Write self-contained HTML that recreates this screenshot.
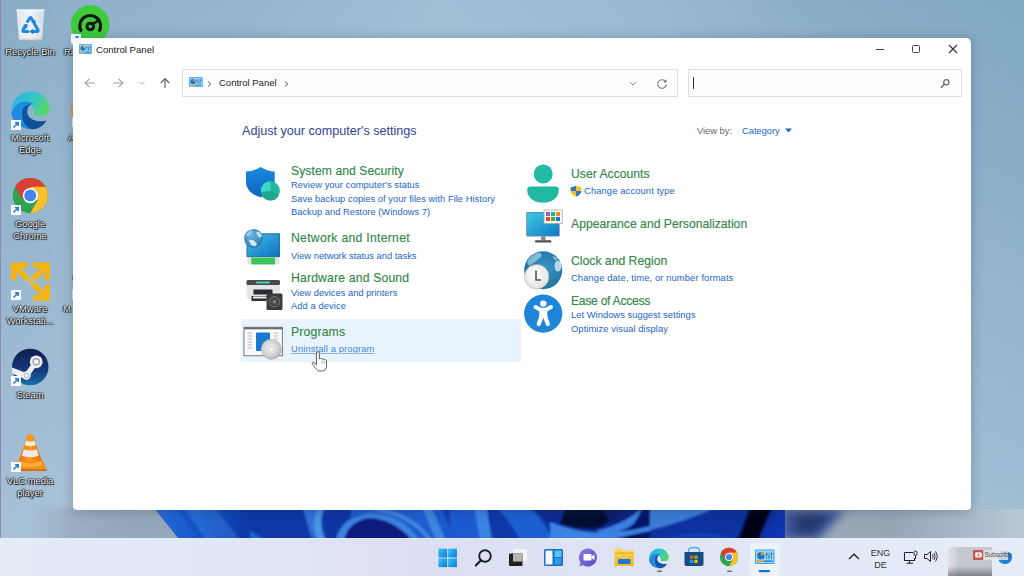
<!DOCTYPE html>
<html><head><meta charset="utf-8">
<style>
*{margin:0;padding:0;box-sizing:border-box}
html,body{width:1024px;height:576px;overflow:hidden}
body{position:relative;font-family:"Liberation Sans",sans-serif;background:#8fb0c9}
.abs{position:absolute}
#desk{left:0;top:0;width:1024px;height:576px;background:linear-gradient(180deg,rgba(200,216,230,0) 0,rgba(200,216,230,.5) 576px),linear-gradient(90deg,#88acc8 0,#8eb0ca 60px,#94b4cc 220px,#a0c0d6 440px,#9abad2 640px,#8aaec8 820px,#80a8c4 1024px)}
#leftline{left:0;top:0;width:1px;height:576px;background:#9088b4}
#bloom{left:150px;top:505px;width:640px;height:35px;background:linear-gradient(90deg,#1740a8 0%,#0f3fb8 30%,#0a2fa0 55%,#1e5fd6 75%,#0a2890 100%)}
#win{left:73px;top:38px;width:898px;height:472px;background:#fff;border-radius:5px 5px 4px 4px;box-shadow:0 1px 12px rgba(30,45,70,.3)}
#taskbar{left:0;top:538px;width:1024px;height:38px;background:linear-gradient(90deg,#e3ebf7 0,#e0e7f6 250px,#dcdff3 420px,#dde2f4 600px,#e2e9f7 800px,#e6edf8 1024px);border-top:1px solid #e8eef8}
.t{position:absolute;white-space:nowrap;line-height:1}
.h{color:#338848;font-size:12.2px;-webkit-text-stroke:.15px #338848}
.l{color:#2366c9;font-size:9.35px}
.sc{position:absolute;width:10px;height:10px;background:#fff}.sc:after{content:"";position:absolute;left:2px;top:2px;width:6px;height:6px;background:linear-gradient(135deg,transparent 40%,#1e7fd8 40%,#1e7fd8 60%,transparent 60%)}
.dl{position:absolute;color:#f4f4f4;font-size:9.4px;text-align:center;text-shadow:0 0 1px #000,1px 1px 1px #000,-1px 0 1px rgba(0,0,0,.7),0 -1px 1px rgba(0,0,0,.5);width:60px;line-height:12px}
</style></head><body>
<div id="desk" class="abs"></div>
<div class="abs" style="left:30px;top:503px;width:152px;height:35px;-webkit-mask-image:linear-gradient(180deg,transparent 0,#000 9px);background:linear-gradient(90deg,rgba(140,156,176,0) 0,rgba(140,156,176,.5) 43px,rgba(140,156,176,.72) 100px,rgba(140,156,176,.72) 152px)"></div>
<svg id="bloomsvg" class="abs" style="left:73px;top:505px" width="951" height="34" viewBox="73 505 951 34">
 <defs>
  <filter id="bl1" x="-10%" y="-50%" width="120%" height="200%"><feGaussianBlur stdDeviation="1"/></filter>
  <filter id="bl4" x="-50%" y="-50%" width="200%" height="200%"><feGaussianBlur stdDeviation="5"/></filter>
  <linearGradient id="bg1" x1="0" y1="0" x2="1" y2="0"><stop offset="0" stop-color="#2a6edc"/><stop offset=".35" stop-color="#1a5ed0"/><stop offset="1" stop-color="#0a38a6"/></linearGradient>
  <linearGradient id="grayr" x1="0" y1="0" x2="1" y2="0"><stop offset="0" stop-color="#9aa8b8"/><stop offset=".45" stop-color="#97a5b5"/><stop offset=".8" stop-color="#acbccc"/><stop offset="1" stop-color="#b8c8d6"/></linearGradient><linearGradient id="graybl" x1="0" y1="0" x2="1" y2="0"><stop offset="0" stop-color="#9aaabb"/><stop offset="1" stop-color="#aab6c2"/></linearGradient>
  <clipPath id="bclip"><path d="M155.9 510H785V538H178.3Z"/></clipPath>
 </defs>
 <!-- gray under-window band -->
 <!-- blurred right part -->
 <rect x="785" y="509" width="239" height="30" fill="url(#grayr)"/>
 <g filter="url(#bl4)">
  <path d="M782 509H846L818 540H782Z" fill="#3a5294"/>
  <path d="M796 514H832L814 534H796Z" fill="#26386e"/>
 </g>
 <g clip-path="url(#bclip)">
  <rect x="150" y="510" width="640" height="28" fill="#0c3aa8"/>
  <g filter="url(#bl1)">
   <!-- 150-250 -->
   <path d="M150 508H250V540H150Z" fill="url(#bg1)"/>
   <path d="M176 508L200 540H206L184 508Z" fill="#1450c0" opacity=".8"/>
   <path d="M184 508H215L240 540H206Z" fill="#3c84e4" opacity=".4"/>
   <!-- 250-350 -->
   <path d="M250 508H305L312 540H250Z" fill="#0a38a6"/>
   <path d="M250 530Q262 540 270 540H250Z" fill="#1e62d4"/>
   <path d="M303 508H318Q312 522 314 540H312Z" fill="#3070d8"/>
   <path d="M318 508Q310 524 316 540H326Q318 524 324 508Z" fill="#4a92e4"/>
   <path d="M324 508H352V540H330Q322 524 324 508Z" fill="#0a36a4"/>
   <path d="M337 540Q340 524 354 518L360 520Q346 528 344 540Z" fill="#3e86e2"/>
   <!-- 350-450 -->
   <path d="M344 540Q348 520 368 517Q392 516 412 540Z" fill="#0a1c7c"/>
   <path d="M336 540Q340 518 368 513Q400 512 420 540H412Q392 518 368 518Q348 522 344 540Z" fill="#3a82e0"/>
   <path d="M352 508H420Q440 520 436 540H420Q400 512 368 513Q356 514 350 518Z" fill="#1c5ed0"/>
   <path d="M378 508Q415 514 432 540H428Q410 516 372 510Z" fill="#5a9ae8" opacity=".7"/>
   <path d="M422 508H432L446 540H436Z" fill="#3c84e0"/>
   <path d="M432 508H442L455 540H446Z" fill="#1a58cc"/>
   <path d="M442 508H478L482 540H455Z" fill="#0e3eb0"/>
   <!-- 450-550 -->
   <path d="M450 508H476L480 540H450Z" fill="#1a5ad2"/>
   <path d="M474 508H487L492 540H480Z" fill="#3a82e2"/>
   <path d="M487 508H498Q512 525 520 540H492Z" fill="#0c38a8"/>
   <path d="M498 508H530Q545 520 552 540H520Q512 525 498 508Z" fill="#1e5ed0"/>
   <path d="M530 508H555V530Q545 518 530 508Z" fill="#0a2a92"/>
   <!-- 550-650 -->
   <path d="M550 508H650V540H550Z" fill="#0a2a92"/>
   <path d="M566 508H625Q615 520 598 528Q580 530 560 524Z" fill="#020a30"/>
   <path d="M600 508H640Q628 522 600 530Q615 520 600 508Z" fill="#0a2278" opacity=".8"/>
   <path d="M596 531Q625 524 642 508H650Q636 528 606 536Z" fill="#3a7ee0"/>
   <path d="M642 508H650V528Q640 532 620 536Q636 526 642 508Z" fill="#06146a"/>
   <path d="M550 522Q575 532 600 533Q625 533 650 526V532Q625 540 600 540H550Z" fill="#3a82e4"/>
   <path d="M612 540Q632 534 650 531V540Z" fill="#061468"/>
   <!-- 650-785 -->
   <path d="M650 508H790V540H650Z" fill="#0a32a0"/>
   <path d="M650 508H714Q690 520 650 530Z" fill="#3a7cd8"/>
   <path d="M660 540Q700 526 740 540Z" fill="#0e48c8" opacity=".6"/>
   <path d="M750 508H780L762 540H738Z" fill="#020618" filter="url(#bl1)"/>
   <path d="M772 508H790V540H758Z" fill="#0a36b0" opacity=".85"/>
  </g>
 </g>
</svg>

<!-- desktop icons -->
<svg class="abs" style="left:0;top:0" width="73" height="510" viewBox="0 0 73 510">
 <defs>
  <linearGradient id="rb" x1="0" y1="0" x2="1" y2="0"><stop offset="0" stop-color="#e6edf3"/><stop offset=".5" stop-color="#f6f9fb"/><stop offset="1" stop-color="#d6e0e8"/></linearGradient>
  <linearGradient id="edg1" x1="0" y1=".2" x2="1" y2=".7"><stop offset="0" stop-color="#2ab2ee"/><stop offset=".55" stop-color="#36c9c0"/><stop offset="1" stop-color="#5ad85a"/></linearGradient>
  <linearGradient id="edg2" x1="0" y1="0" x2="1" y2="1"><stop offset="0" stop-color="#0c59a4"/><stop offset="1" stop-color="#114a8b"/></linearGradient>
  <linearGradient id="stm" x1="0" y1="0" x2="0" y2="1"><stop offset="0" stop-color="#111d4e"/><stop offset=".6" stop-color="#17397a"/><stop offset="1" stop-color="#1670b0"/></linearGradient>
  <linearGradient id="vlc" x1="0" y1="0" x2="1" y2="0"><stop offset="0" stop-color="#e8700a"/><stop offset=".5" stop-color="#ff9a20"/><stop offset="1" stop-color="#e06a00"/></linearGradient>
 </defs>
 <!-- recycle bin -->
 <path d="M16.5 9.5H44.5L42 40H19Z" fill="url(#rb)" opacity=".92"/><path d="M16.5 9.5H44.5V11H16.5Z" fill="#fff" opacity=".7"/>
 <path d="M19 38.5H42L41.8 40.5H19.2Z" fill="#d8b8a0" opacity=".6"/>
 <g fill="none" stroke="#1e86de" stroke-width="3" stroke-linecap="round" stroke-linejoin="round">
  <path d="M27.5 21.5L29.8 18Q30.5 17 31.2 18L33 21"/>
  <path d="M34.5 24L38 30Q38.5 31.5 37 31.5H33"/>
  <path d="M28 31.5H24Q22.5 31.5 23 30L25.5 25.5"/>
 </g>
 <g fill="#1e86de"><path d="M31 22.5L35.5 20L35.8 24.8Z"/><path d="M33 28.5V34.5L29.5 31.5Z"/><path d="M23 25L27.8 24.2L27 28.8Z"/></g>
 <!-- edge -->
 <path d="M11.5 111C11.5 100 20 91.4 31 91.4C42 91.4 49.6 100 49.6 108.5C49.6 113 46.5 115.5 42 115.5H34C35.5 111.5 34 107 30 105.3C24 103 16 105 11.8 112Z" fill="url(#edg1)"/>
 <path d="M11.8 112C14.5 105 20 101.5 26 101.5C29.5 101.5 32 102.5 33.5 104C28 103.5 23 107 22 112.5C21 120 26 127 33 129.3C21 129.5 11.5 122 11.5 112Z" fill="#1d8ce0"/>
 <path d="M22 112.5C22.5 107 26.5 104 31 104.3C27.5 107 26.5 111 27.8 114.5C29.5 119 35 121.5 41 121.3C43.5 121.2 45.5 120.8 46.4 120.5C44 125.5 38 129.3 32.5 129.3C26 128.5 21.5 121 22 112.5Z" fill="url(#edg2)"/>
 <!-- chrome -->
 <circle cx="30.3" cy="195.6" r="17.6" fill="#2ea44f"/>
 <path d="M30.3 195.6L15 186.8A17.6 17.6 0 0 1 45.5 186.8Z" fill="#dc3e33"/>
 <path d="M30.3 195.6L45.5 186.8A17.6 17.6 0 0 1 30.3 213.2Z" fill="#f8c12c"/>
 <path d="M15 186.8L22.6 200L30.3 195.6Z" fill="#dc3e33"/>
 <path d="M30.3 213.2L37.9 200L45.5 186.8 30.3 186.8Z" fill="#f8c12c"/>
 <path d="M22.6 200L30.3 213.2L37.9 200Z" fill="#2ea44f"/>
 <circle cx="30.3" cy="195.6" r="7.6" fill="#fff"/>
 <circle cx="30.3" cy="195.6" r="6" fill="#4285f0"/>
 <!-- vmware -->
 <g fill="none" stroke="#f2b416" stroke-width="5.6" stroke-linejoin="miter">
  <path d="M13.8 280V265.3H27.5"/>
  <path d="M33 265.3H47.2V280"/>
  <path d="M47.2 284.5V298H33"/>
  <path d="M15 266.5L30.5 281.5L46 266.5M30.5 281.5L46 297"/>
 </g>
 <rect x="27" y="278" width="7" height="7" fill="#a8bfd3" transform="rotate(45 30.5 281.5)"/>
 <rect x="28.5" y="279.5" width="4" height="4" fill="#f2b416" transform="rotate(45 30.5 281.5)"/>
 <!-- steam -->
 <circle cx="30.2" cy="367" r="18.3" fill="url(#stm)"/>
 <path d="M11.9 367.5L25 372.5L27 380L12.5 373.5Z" fill="#eef0f4"/>
 <path d="M26.5 375.5L36.2 361.8" stroke="#eef0f4" stroke-width="5"/>
 <circle cx="36.2" cy="361.8" r="6.4" fill="#eef0f4"/>
 <circle cx="36.2" cy="361.8" r="3.7" fill="#8c8eb0"/>
 <circle cx="36.2" cy="361.8" r="2.6" fill="#f4f4f8"/>
 <circle cx="26.5" cy="375.5" r="4.2" fill="#eef0f4"/>
 <circle cx="26.5" cy="375.5" r="2.4" fill="none" stroke="#9a9cb8" stroke-width=".7"/>
 <!-- vlc -->
 <path d="M27.3 435.5C28 433.8 32.5 433.8 33.2 435.5L42.5 463H18Z" fill="url(#vlc)"/>
 <path d="M26 440.5C28 441.8 32.5 441.8 34.5 440.5L35.8 445C33 446.5 27.5 446.5 24.7 445Z" fill="#ececec"/>
 <path d="M23.8 449C27 451 33.5 451 36.7 449L38.6 455.5C34.5 457.8 26 457.8 21.9 455.5Z" fill="#ececec"/>
 <path d="M17 461L43.5 461L46.5 470.5H16.5Z" fill="#f39018"/>
 <path d="M19.5 460.5C24 464.5 36.5 464.5 41 460.5L42 465C36 468 24 468 18.5 465Z" fill="#ffad40"/>
 <path d="M16.5 469H46.5V471H16.5Z" fill="#d87000"/>
 <!-- green app (partially) -->
 <circle cx="90" cy="24" r="19" fill="#3ec83e"/>
</svg>
<!-- green app icon -->
<svg class="abs" style="left:70px;top:4px" width="40" height="34" viewBox="70 4 40 34">
 <circle cx="90.3" cy="24.5" r="19.2" fill="#3ecb3a"/>
 <path d="M81.5 31.6A10.4 10.4 0 1 1 98.9 31.6" fill="none" stroke="#161616" stroke-width="3.2"/>
 <circle cx="90.3" cy="26.5" r="4.8" fill="#161616"/>
 <circle cx="90.3" cy="26.5" r="1.8" fill="#3ecb3a"/>
 <path d="M92.5 24.2L97.8 21" stroke="#161616" stroke-width="2.6" stroke-linecap="round"/>
</svg>
<!-- shortcut arrows -->
<svg class="abs" style="left:11px;top:120px" width="10" height="10" viewBox="0 0 10 10"><rect width="10" height="10" fill="#fafafa"/><path d="M2.5 7.5L7 3M4 2.8H7.2V6" fill="none" stroke="#1e80d8" stroke-width="1.5"/></svg>
<svg class="abs" style="left:11px;top:205px" width="10" height="10" viewBox="0 0 10 10"><rect width="10" height="10" fill="#fafafa"/><path d="M2.5 7.5L7 3M4 2.8H7.2V6" fill="none" stroke="#1e80d8" stroke-width="1.5"/></svg>
<svg class="abs" style="left:11px;top:290px" width="10" height="10" viewBox="0 0 10 10"><rect width="10" height="10" fill="#fafafa"/><path d="M2.5 7.5L7 3M4 2.8H7.2V6" fill="none" stroke="#1e80d8" stroke-width="1.5"/></svg>
<svg class="abs" style="left:11px;top:376px" width="10" height="10" viewBox="0 0 10 10"><rect width="10" height="10" fill="#fafafa"/><path d="M2.5 7.5L7 3M4 2.8H7.2V6" fill="none" stroke="#1e80d8" stroke-width="1.5"/></svg>
<svg class="abs" style="left:11px;top:462px" width="10" height="10" viewBox="0 0 10 10"><rect width="10" height="10" fill="#fafafa"/><path d="M2.5 7.5L7 3M4 2.8H7.2V6" fill="none" stroke="#1e80d8" stroke-width="1.5"/></svg>
<!-- labels -->
<div class="dl" style="left:0px;top:46px">Recycle Bin</div>
<div class="dl" style="left:64px;top:46px;text-align:left;width:20px">Ra</div>
<div class="dl" style="left:0px;top:132px">Microsoft<br>Edge</div>
<div class="dl" style="left:0px;top:218px">Google<br>Chrome</div>
<div class="dl" style="left:0px;top:303px">VMware<br>Workstati...</div>
<div class="dl" style="left:63px;top:303px;text-align:left;width:20px">M</div>
<div class="dl" style="left:0px;top:389px">Steam</div>
<div class="dl" style="left:0px;top:475px">VLC media<br>player</div>

<!-- partial icons under window -->
<div class="abs" style="left:71px;top:104px;width:2px;height:12px;background:#e8944a;border-radius:1px 0 0 1px"></div>
<div class="abs" style="left:71.5px;top:118px;width:1.5px;height:9px;background:#e6ecf2"></div>
<div class="dl" style="left:68px;top:132px;text-align:left;width:10px">A</div>
<div class="abs" style="left:71.5px;top:275px;width:1.5px;height:5px;background:#7a6ad0"></div>
<div class="abs" style="left:71.5px;top:290px;width:1.5px;height:9px;background:#e6ecf2"></div>

<div id="leftline" class="abs"></div>

<!-- window -->
<div id="win" class="abs"></div>
<div class="abs" style="left:71px;top:34px;width:10px;height:10px;background:#f2f4f8;border-radius:0 0 0 2px"></div>
<div class="abs" style="left:75px;top:36px;width:4px;height:2px;background:#3a8ed0;border-radius:1px"></div>


<!-- title icon -->
<svg class="abs" style="left:79px;top:43.7px" width="13.2" height="10" viewBox="0 0 20 15" preserveAspectRatio="none">
   <rect x="0" y="0" width="20" height="15" rx="1" fill="#3aa4e4"/>
   <rect x="1" y="1" width="18" height="13" fill="#9ad6f4"/>
   <circle cx="6" cy="6.5" r="3.8" fill="#1a74cc"/>
   <path d="M6 6.5V2.7A3.8 3.8 0 0 1 9.6 5.5Z" fill="#f39a1a"/>
   <path d="M12 3v7M14.5 3v7M17 3v7" stroke="#2a78c0" stroke-width=".8"/>
   <path d="M11.2 5h1.6M13.7 7.5h1.6M16.2 4.5h1.6" stroke="#1a5aa0" stroke-width="1.2"/>
   <rect x="2" y="11.3" width="7" height="1.6" fill="#f39a1a"/>
   <rect x="9" y="11.3" width="9" height="1.6" fill="#2a86d6"/>
  </svg>
<div class="t" style="left:96px;top:45px;font-size:9.6px;color:#1a1a1a">Control Panel</div>
<!-- window controls -->
<div class="abs" style="left:876px;top:49px;width:8px;height:1px;background:#444"></div>
<div class="abs" style="left:912px;top:45px;width:8px;height:8px;border:1.2px solid #444;border-radius:1.5px"></div>
<svg class="abs" style="left:948px;top:44px" width="10" height="10" viewBox="0 0 10 10"><path d="M1 1L9 9M9 1L1 9" stroke="#333" stroke-width="1.1"/></svg>
<!-- nav arrows -->
<svg class="abs" style="left:83px;top:77px" width="14" height="12" viewBox="0 0 14 12"><path d="M12 6H2.5M6.5 1.8L2 6l4.5 4.2" fill="none" stroke="#a0a0a0" stroke-width="1.1"/></svg>
<svg class="abs" style="left:111px;top:77px" width="14" height="12" viewBox="0 0 14 12"><path d="M2 6h9.5M7.5 1.8L12 6l-4.5 4.2" fill="none" stroke="#a0a0a0" stroke-width="1.1"/></svg>
<svg class="abs" style="left:139px;top:81px" width="6" height="4" viewBox="0 0 6 4"><path d="M.5 .8L3 3.2 5.5 .8" fill="none" stroke="#a8a8a8" stroke-width=".9"/></svg>
<svg class="abs" style="left:159px;top:77px" width="12" height="12" viewBox="0 0 12 12"><path d="M6 11V2M1.8 6L6 1.6 10.2 6" fill="none" stroke="#5c5c5c" stroke-width="1.1"/></svg>
<!-- address bar -->
<div class="abs" style="left:182px;top:69px;width:496px;height:28px;border:1px solid #dedede;background:#fdfdfd"></div>
<svg class="abs" style="left:189.3px;top:77px" width="13.7" height="10.3" viewBox="0 0 20 15" preserveAspectRatio="none">
   <rect x="0" y="0" width="20" height="15" rx="1" fill="#3aa4e4"/>
   <rect x="1" y="1" width="18" height="13" fill="#9ad6f4"/>
   <circle cx="6" cy="6.5" r="3.8" fill="#1a74cc"/>
   <path d="M6 6.5V2.7A3.8 3.8 0 0 1 9.6 5.5Z" fill="#f39a1a"/>
   <path d="M12 3v7M14.5 3v7M17 3v7" stroke="#2a78c0" stroke-width=".8"/>
   <path d="M11.2 5h1.6M13.7 7.5h1.6M16.2 4.5h1.6" stroke="#1a5aa0" stroke-width="1.2"/>
   <rect x="2" y="11.3" width="7" height="1.6" fill="#f39a1a"/>
   <rect x="9" y="11.3" width="9" height="1.6" fill="#2a86d6"/>
  </svg>
<svg class="abs" style="left:207px;top:81px" width="5" height="6" viewBox="0 0 5 6"><path d="M1 .6L3.8 3 1 5.4" fill="none" stroke="#555" stroke-width="1"/></svg>
<div class="t" style="left:219px;top:78px;font-size:9.5px;color:#222">Control Panel</div>
<svg class="abs" style="left:284px;top:81px" width="5" height="6" viewBox="0 0 5 6"><path d="M1 .6L3.8 3 1 5.4" fill="none" stroke="#555" stroke-width="1"/></svg>
<svg class="abs" style="left:629px;top:81px" width="8" height="5" viewBox="0 0 8 5"><path d="M.8 1L4 4 7.2 1" fill="none" stroke="#8a8a8a" stroke-width="1"/></svg>
<svg class="abs" style="left:656px;top:78px" width="12" height="12" viewBox="0 0 12 12"><path d="M9.6 3.6A4.3 4.3 0 1 0 10.3 6.4" fill="none" stroke="#777" stroke-width="1.1"/><path d="M10.6 1.2v3.2H7.4z" fill="#777"/></svg>
<!-- search -->
<div class="abs" style="left:688px;top:69px;width:274px;height:28px;border:1px solid #dedede;background:#fdfdfd"></div>
<div class="abs" style="left:693px;top:77px;width:1px;height:12px;background:#333"></div>
<svg class="abs" style="left:939px;top:77px" width="11" height="12" viewBox="0 0 11 12"><circle cx="7.3" cy="5.3" r="2.6" fill="none" stroke="#666" stroke-width="1.2"/><path d="M5.4 7.2L1.8 10.8" stroke="#666" stroke-width="1.3"/></svg>
<!-- view by triangle -->
<svg class="abs" style="left:785px;top:128px" width="7" height="5" viewBox="0 0 7 5"><path d="M0 .5h7L3.5 4.5z" fill="#2366c9"/></svg>
<!-- programs highlight -->
<div class="abs" style="left:241px;top:319px;width:280px;height:43px;background:#e9f3fb"></div>


<!-- content headings -->
<div class="t" style="left:242px;top:125px;font-size:12.6px;color:#2f4496">Adjust your computer's settings</div>
<div class="t" style="left:697px;top:127px;font-size:9.3px;color:#666">View by:</div>
<div class="t" style="left:742px;top:127px;font-size:9.3px;color:#2366c9">Category</div>

<div class="t h" style="left:291px;top:165px;letter-spacing:0.056px">System and Security</div>
<div class="t l" style="left:291px;top:181px;letter-spacing:0.057px">Review your computer's status</div>
<div class="t l" style="left:291px;top:195px;letter-spacing:0.029px">Save backup copies of your files with File History</div>
<div class="t l" style="left:291px;top:208px">Backup and Restore (Windows 7)</div>

<div class="t h" style="left:291px;top:232px;letter-spacing:0.289px">Network and Internet</div>
<div class="t l" style="left:291px;top:252px">View network status and tasks</div>

<div class="t h" style="left:291px;top:272px;letter-spacing:0.171px">Hardware and Sound</div>
<div class="t l" style="left:291px;top:289px">View devices and printers</div>
<div class="t l" style="left:291px;top:302px;letter-spacing:0.073px">Add a device</div>

<div class="t h" style="left:291px;top:326px;letter-spacing:0.171px">Programs</div>
<div class="t l" style="left:291px;top:345px;text-decoration:underline;text-decoration-color:#7ab2ea;color:#3a88e0;letter-spacing:0.128px">Uninstall a program</div>

<div class="t h" style="left:571px;top:168px">User Accounts</div>
<div class="t l" style="left:584px;top:187px;letter-spacing:0.133px">Change account type</div>
<div class="t h" style="left:571px;top:218px">Appearance and Personalization</div>
<div class="t h" style="left:571px;top:255px">Clock and Region</div>
<div class="t l" style="left:571px;top:274px;letter-spacing:0.126px">Change date, time, or number formats</div>
<div class="t h" style="left:571px;top:295px;letter-spacing:-0.308px">Ease of Access</div>
<div class="t l" style="left:571px;top:311px;letter-spacing:0.033px">Let Windows suggest settings</div>
<div class="t l" style="left:571px;top:325px;letter-spacing:0.086px">Optimize visual display</div>


<!-- CP icons -->
<svg class="abs" style="left:240px;top:160px" width="50" height="210" viewBox="240 160 50 210">
 <defs>
  <linearGradient id="shg" x1="0" y1="0" x2="0" y2="1"><stop offset="0" stop-color="#1c8ae0"/><stop offset="1" stop-color="#0c64c0"/></linearGradient>
  <linearGradient id="mong" x1="0" y1="0" x2="1" y2="1"><stop offset="0" stop-color="#3cc0e8"/><stop offset="1" stop-color="#1270c0"/></linearGradient>
  <radialGradient id="glob" cx=".4" cy=".35" r=".7"><stop offset="0" stop-color="#6ab4e0"/><stop offset="1" stop-color="#2a78aa"/></radialGradient>
  <radialGradient id="disc" cx=".45" cy=".45" r=".6"><stop offset="0" stop-color="#f4f4f4"/><stop offset=".6" stop-color="#d2d2d2"/><stop offset="1" stop-color="#b0b0b0"/></radialGradient>
 </defs>
 <!-- shield -->
 <path d="M246 171.5C251 171.5 256 169.5 260.5 167C265 169.5 270 171.5 274.7 171.5V182C274.7 190 268 195 260.5 197.3C253 195 246 190 246 182Z" fill="url(#shg)"/>
 <circle cx="270.4" cy="190.8" r="9.5" fill="#22b9a0"/>
 <path d="M270.4 190.8V181.3A9.5 9.5 0 0 0 261 192.5Z" fill="#3dd6c0"/>
 <path d="M270.4 190.8L261 192.5A9.5 9.5 0 0 0 279 195Z" fill="#1fa890"/>
 <!-- network -->
 <rect x="246.5" y="233.3" width="33.5" height="24" rx="1" fill="#2a6a8a"/>
 <rect x="247.3" y="234.2" width="32" height="22.2" fill="url(#mong)"/>
 <rect x="247.5" y="258" width="32" height="6" fill="#e2e2e2"/>
 <rect x="251.3" y="257.6" width="23.7" height="6.9" fill="#3cc55c"/>
 <circle cx="253.5" cy="238.5" r="9.5" fill="url(#glob)"/>
 <path d="M248.5 239.5L254 240.5L257 244L255 246.5L251 245Z" fill="#e8f4fa" opacity=".9"/>
 <path d="M256 231.5L260 232.5L262 236L259.5 238L257 235Z" fill="#d8ecf6" opacity=".85"/>
 <path d="M246 236C247 233 249 231 251.5 230L252.5 232.5L249 236Z" fill="#b8dcf0" opacity=".7"/>
 <!-- hardware -->
 <rect x="246.5" y="280" width="33.5" height="19" rx="1.5" fill="#e4e5ea"/>
 <rect x="246.5" y="280" width="33.5" height="5" rx="1.5" fill="#4a4a4e"/>
 <rect x="256" y="281.5" width="14" height="2" rx="1" fill="#40d8b0"/>
 <rect x="253.5" y="289.5" width="19" height="5" fill="#2a2a2c"/>
 <rect x="251.5" y="296" width="15" height="5" fill="#2e2e30"/>
 <rect x="253" y="296.5" width="13" height="2" fill="#f0f0f0"/>
 <rect x="266.5" y="293.6" width="16" height="16.4" rx="1.5" fill="#3a3a3c"/>
 <circle cx="274.5" cy="301.8" r="5.3" fill="#4a4a4c" stroke="#7a7a7c" stroke-width=".8"/>
 <circle cx="274.5" cy="301.8" r="1.6" fill="#8a8a8c"/>
 <!-- programs -->
 <rect x="244" y="327.3" width="38.4" height="28.4" fill="#fafafa" stroke="#7a7a7a" stroke-width="1"/>
 <rect x="244" y="327.3" width="38.4" height="2" fill="#6a6a6a"/>
 <g stroke="#b8b8b8" stroke-width="1"><path d="M247.5 333h4.5M247.5 336h4.5M247.5 339h4.5M247.5 342h4.5M247.5 345h4.5M247.5 348h4.5M273.5 333h4.5M273.5 336h4.5M273.5 339h4.5"/></g>
 <rect x="256" y="332.5" width="14" height="18.5" rx="1" fill="#1a78d0"/>
 <circle cx="271.4" cy="349.4" r="10.4" fill="url(#disc)"/>
 <circle cx="271.4" cy="349.4" r="2.6" fill="#f8f8f8" stroke="#c0c0c0" stroke-width=".6"/>
</svg>

<svg class="abs" style="left:518px;top:158px" width="50" height="180" viewBox="518 158 50 180">
 <defs>
  <linearGradient id="apg" x1="0" y1="0" x2="1" y2="1"><stop offset="0" stop-color="#3ccbe0"/><stop offset="1" stop-color="#1378c8"/></linearGradient>
  <radialGradient id="cglob" cx=".55" cy=".45" r=".6"><stop offset="0" stop-color="#3a98c8"/><stop offset="1" stop-color="#1f6e9e"/></radialGradient>
  <radialGradient id="clk" cx=".45" cy=".4" r=".6"><stop offset="0" stop-color="#ffffff"/><stop offset="1" stop-color="#e2e2e2"/></radialGradient>
 </defs>
 <!-- user -->
 <circle cx="543.2" cy="174" r="9.5" fill="#22bca4"/>
 <path d="M527.2 190Q527.2 186.6 530.8 186.6H555.2Q558.8 186.6 558.8 190C558.8 198.5 551 202.7 543 202.7S527.2 198.5 527.2 190Z" fill="#20b89f"/>
 <!-- appearance -->
 <rect x="526.2" y="212" width="33.5" height="24.4" rx="1" fill="#6a8a9a"/>
 <rect x="527" y="212.8" width="32" height="22.8" fill="url(#apg)"/>
 <rect x="541" y="236.4" width="4.5" height="4" fill="#8a8a8a"/>
 <rect x="535" y="240.3" width="16.4" height="2.2" rx="1" fill="#505050"/>
 <rect x="544" y="210" width="18.3" height="13.4" fill="#fafafa" stroke="#a8a8a8" stroke-width=".8"/>
 <rect x="546" y="212" width="4" height="4" fill="#9a5ac8"/><rect x="551" y="212" width="4" height="4" fill="#20b0a0"/><rect x="556" y="212" width="4" height="4" fill="#f08a20"/>
 <rect x="546" y="217" width="4" height="4" fill="#e04a20"/><rect x="551" y="217" width="4" height="4" fill="#40b030"/><rect x="556" y="217" width="4" height="4" fill="#1a70d0"/>
 <!-- clock -->
 <circle cx="543.2" cy="270.2" r="19" fill="url(#cglob)"/>
 <path d="M527 262C530 256 536 253 540 252.5L542 256L535 262L529 266Z" fill="#a8d4ec" opacity=".7"/>
 <ellipse cx="558" cy="266" rx="3.5" ry="5.5" fill="#cde6f4" opacity=".85"/>
 <path d="M552 256L558 258L556 261Z" fill="#b8dcf0" opacity=".7"/>
 <circle cx="536.7" cy="276.7" r="12.2" fill="url(#clk)" stroke="#b8b8b8" stroke-width=".7"/>
 <path d="M536 270.5V280H541" fill="none" stroke="#555" stroke-width="1.6"/>
 <!-- ease -->
 <circle cx="543.2" cy="313.6" r="19.1" fill="#1e86d8"/>
 <circle cx="543.3" cy="303.6" r="3.2" fill="#fff"/>
 <path d="M535.5 307L540.5 309.8H546L551 307" fill="none" stroke="#fff" stroke-width="3.9" stroke-linecap="round" stroke-linejoin="round"/>
 <rect x="539.3" y="308.5" width="8" height="9.5" rx="1" fill="#fff"/>
 <path d="M541.5 316.5L538.8 324M545.1 316.5L547.8 324" stroke="#fff" stroke-width="4.2" stroke-linecap="round"/>
</svg>
<!-- UAC shield -->
<svg class="abs" style="left:570px;top:185px" width="12" height="12" viewBox="0 0 12 12">
 <path d="M6 .5C4.5 1.5 2.5 2 .8 2V6C.8 9 3.5 10.8 6 11.5C8.5 10.8 11.2 9 11.2 6V2C9.5 2 7.5 1.5 6 .5Z" fill="#f4c020"/>
 <path d="M6 .5C4.5 1.5 2.5 2 .8 2V6H6Z" fill="#2a78d0"/><path d="M6 6H11.2C11.2 9 8.5 10.8 6 11.5Z" fill="#2a78d0"/>
</svg>
<!-- hand cursor -->
<svg class="abs" style="left:310px;top:350px" width="19" height="23" viewBox="0 0 19 23">
 <path d="M6.4 3C6.4 1.4 9.4 1.4 9.4 3V9C9.9 8.2 11.6 8.3 11.9 9.3C12.4 8.6 14 8.7 14.2 9.8C14.8 9.3 16.5 9.5 16.5 10.8V15.8C16.5 19.2 14.6 21 11.6 21H10.2C7.8 21 6.8 19.8 5.6 18.2L2.3 14.2C1.6 13.1 2.9 11.7 4 12.6L6.4 14.8Z" fill="#fff" stroke="#5a5a5a" stroke-width="1" stroke-linejoin="round"/>
 <path d="M11.9 10.5V13.8M14.2 10.8V13.8" stroke="#8a8a8a" stroke-width=".7"/>
</svg>

<div id="taskbar" class="abs"></div>
<!-- taskbar icons -->
<svg class="abs" style="left:430px;top:540px" width="360" height="36" viewBox="430 540 360 36">
 <defs>
  <linearGradient id="wlogo" x1="0" y1="0" x2="1" y2="1"><stop offset="0" stop-color="#3ec6f4"/><stop offset="1" stop-color="#0a78d4"/></linearGradient>
  <linearGradient id="fold" x1="0" y1="0" x2="0" y2="1"><stop offset="0" stop-color="#ffd65c"/><stop offset="1" stop-color="#f3b82c"/></linearGradient>
  <linearGradient id="chat" x1="0" y1="0" x2="1" y2="1"><stop offset="0" stop-color="#8a7ee0"/><stop offset="1" stop-color="#5a48c0"/></linearGradient>
  <linearGradient id="tedg1" x1="0" y1=".2" x2="1" y2=".7"><stop offset="0" stop-color="#2ab2ee"/><stop offset=".55" stop-color="#36c9c0"/><stop offset="1" stop-color="#5ad85a"/></linearGradient>
 </defs>
 <!-- windows -->
 <rect x="438.4" y="548.6" width="8.8" height="8.8" fill="url(#wlogo)"/>
 <rect x="448.1" y="548.6" width="8.8" height="8.8" fill="url(#wlogo)"/>
 <rect x="438.4" y="558.3" width="8.8" height="8.8" fill="url(#wlogo)"/>
 <rect x="448.1" y="558.3" width="8.8" height="8.8" fill="url(#wlogo)"/>
 <!-- search -->
 <circle cx="485" cy="556" r="5.8" fill="none" stroke="#1c1c1c" stroke-width="1.9"/>
 <path d="M481 560.2L475.8 565.4" stroke="#1c1c1c" stroke-width="2.1" stroke-linecap="round"/>
 <!-- task view -->
 <rect x="513.5" y="549" width="13.5" height="12.5" rx="1" fill="#f4f4f6"/>
 <rect x="509" y="553.5" width="13.5" height="12.5" rx="1" fill="#202020"/>
 <rect x="513" y="553.5" width="9.5" height="8" fill="#b4b4b6"/>
 <!-- widgets -->
 <rect x="544" y="549" width="19" height="17" rx="1.5" fill="#1a6ec8"/>
 <rect x="545.5" y="550.5" width="7" height="14" fill="#f6f8fa"/>
 <rect x="554.5" y="550.5" width="7" height="6.5" fill="#5ac2f2"/>
 <rect x="554.5" y="558" width="7" height="6.5" fill="#2a9ae8"/>
 <!-- chat -->
 <path d="M588.4 548.5A9 9 0 1 1 583 565L579.5 566.5L580.5 562.5A9 9 0 0 1 588.4 548.5Z" fill="url(#chat)"/>
 <rect x="583.5" y="554" width="8" height="6.5" rx="1" fill="#fff"/>
 <path d="M591.5 556.5L594.5 554.5V560L591.5 558Z" fill="#fff"/>
 <!-- explorer -->
 <path d="M614.5 550C614.5 549 615 548.6 616 548.6H621L623 550.5H633C633.6 550.5 634 551 634 551.5V565C634 565.6 633.6 566 633 566H615.5C615 566 614.5 565.6 614.5 565Z" fill="url(#fold)"/>
 <path d="M614.5 552.5H634V553.5H614.5Z" fill="#e8a820"/>
 <rect x="618" y="559" width="12.5" height="5" rx="1" fill="#1f78d0"/>
 <!-- edge -->
 <g transform="translate(649,548.5) scale(.52) translate(-11.5,-91.4)">
 <path d="M11.5 111C11.5 100 20 91.4 31 91.4C42 91.4 49.6 100 49.6 108.5C49.6 113 46.5 115.5 42 115.5H34C35.5 111.5 34 107 30 105.3C24 103 16 105 11.8 112Z" fill="url(#tedg1)"/>
 <path d="M11.8 112C14.5 105 20 101.5 26 101.5C29.5 101.5 32 102.5 33.5 104C28 103.5 23 107 22 112.5C21 120 26 127 33 129.3C21 129.5 11.5 122 11.5 112Z" fill="#1d8ce0"/>
 <path d="M22 112.5C22.5 107 26.5 104 31 104.3C27.5 107 26.5 111 27.8 114.5C29.5 119 35 121.5 41 121.3C43.5 121.2 45.5 120.8 46.4 120.5C44 125.5 38 129.3 32.5 129.3C26 128.5 21.5 121 22 112.5Z" fill="#1456a6"/>
 </g>
 <rect x="657" y="570.5" width="5" height="1.6" rx=".8" fill="#6a6e78"/>
 <!-- store -->
 <path d="M688.5 552V550.5C688.5 548.5 690 547.5 694 547.5C698 547.5 699.5 548.5 699.5 550.5V552" fill="none" stroke="#3ab0f0" stroke-width="1.3"/>
 <path d="M684.5 552H703.5V564C703.5 565.2 702.6 566 701.5 566H686.5C685.4 566 684.5 565.2 684.5 564Z" fill="#1a4a84"/>
 <rect x="690" y="555.5" width="3.3" height="3.3" fill="#f25022"/><rect x="694.3" y="555.5" width="3.3" height="3.3" fill="#7fba00"/>
 <rect x="690" y="559.8" width="3.3" height="3.3" fill="#00a4ef"/><rect x="694.3" y="559.8" width="3.3" height="3.3" fill="#ffb900"/>
 <!-- chrome -->
 <g transform="translate(729,557) scale(.52) translate(-30.3,-195.6)">
 <circle cx="30.3" cy="195.6" r="17.6" fill="#2ea44f"/>
 <path d="M30.3 195.6L15 186.8A17.6 17.6 0 0 1 45.5 186.8Z" fill="#dc3e33"/>
 <path d="M30.3 195.6L45.5 186.8A17.6 17.6 0 0 1 30.3 213.2Z" fill="#f8c12c"/>
 <path d="M15 186.8L22.6 200L30.3 195.6Z" fill="#dc3e33"/>
 <path d="M30.3 213.2L37.9 200L45.5 186.8 30.3 186.8Z" fill="#f8c12c"/>
 <path d="M22.6 200L30.3 213.2L37.9 200Z" fill="#2ea44f"/>
 <circle cx="30.3" cy="195.6" r="7.6" fill="#fff"/>
 <circle cx="30.3" cy="195.6" r="6" fill="#4285f0"/>
 </g>
 <rect x="727" y="570.5" width="5" height="1.6" rx=".8" fill="#6a6e78"/>
 <!-- control panel active -->
 <rect x="750" y="543" width="29.6" height="33" rx="3" fill="#eef2f9" opacity=".9"/>
 <g transform="translate(755,549.5) scale(.975,.9667)">
   <rect x="0" y="0" width="20" height="15" rx="1" fill="#3aa4e4"/>
   <rect x="1" y="1" width="18" height="13" fill="#9ad6f4"/>
   <circle cx="6" cy="6.5" r="3.8" fill="#1a74cc"/>
   <path d="M6 6.5V2.7A3.8 3.8 0 0 1 9.6 5.5Z" fill="#f39a1a"/>
   <path d="M12 3v7M14.5 3v7M17 3v7" stroke="#2a78c0" stroke-width=".8"/>
   <path d="M11.2 5h1.6M13.7 7.5h1.6M16.2 4.5h1.6" stroke="#1a5aa0" stroke-width="1.2"/>
   <rect x="2" y="11.3" width="7" height="1.6" fill="#f39a1a"/>
   <rect x="9" y="11.3" width="9" height="1.6" fill="#2a86d6"/>
  </g>
 <rect x="758.6" y="570" width="11.4" height="2.2" rx="1.1" fill="#1a6ed0"/>
</svg>
<!-- tray -->
<svg class="abs" style="left:846px;top:550px" width="16" height="12" viewBox="0 0 16 12"><path d="M3 9L8 4.2 13 9" fill="none" stroke="#222" stroke-width="1.3"/></svg>
<div class="t" style="left:870px;top:547px;font-size:9px;color:#333;line-height:12px;text-align:center;width:21px">ENG<br>DE</div>
<svg class="abs" style="left:903px;top:550px" width="16" height="15" viewBox="0 0 16 15">
 <path d="M1.5 2.5H10M1.5 2.5V10.5H11.5V8" fill="none" stroke="#222" stroke-width="1.1"/>
 <path d="M6.5 10.5V13M3.5 13.2H10" stroke="#222" stroke-width="1.1"/>
 <rect x="11" y="1" width="3" height="4.5" rx="1.5" fill="none" stroke="#222" stroke-width="1"/><path d="M12.5 5.5V9" stroke="#222" stroke-width="1"/>
</svg>
<svg class="abs" style="left:923px;top:550px" width="15" height="13" viewBox="0 0 15 13">
 <path d="M1.5 4.5H4L7.5 1.5V11.5L4 8.5H1.5Z" fill="none" stroke="#222" stroke-width="1"/>
 <path d="M9.5 4.5Q10.8 6.5 9.5 8.5M11 3Q13.3 6.5 11 10M12.5 1.5Q15.8 6.5 12.5 11.5" fill="none" stroke="#222" stroke-width=".9"/>
</svg>
<div class="abs" style="left:948px;top:547px;width:44px;height:29px;background:linear-gradient(180deg,rgba(0,0,0,0) 0%,rgba(0,0,0,0) 65%,rgba(40,42,48,.45) 100%),linear-gradient(90deg,#e2e4e8 0%,#c6cad0 25%,#c4c8ce 100%)"></div>
<div class="abs" style="left:998px;top:550.5px;width:13.5px;height:13.5px;border-radius:50%;background:#1c82da"></div>
<div class="abs" style="left:983.5px;top:550.3px;width:24.5px;height:9.4px;background:rgba(226,228,232,.85)"></div>
<div class="t" style="left:984.5px;top:551.5px;font-size:6.6px;color:#555;letter-spacing:-.2px">Subscribe</div>
<div class="abs" style="left:972.8px;top:549.8px;width:10.7px;height:10.1px;background:#c65a50"></div>
<svg class="abs" style="left:974.5px;top:552px" width="7" height="6" viewBox="0 0 7 6"><rect x=".2" y=".2" width="6.6" height="5.4" rx="1.4" fill="#f4e8e6"/><path d="M2.8 1.6V4.2L4.8 2.9Z" fill="#c65a50"/></svg>

</body></html>
